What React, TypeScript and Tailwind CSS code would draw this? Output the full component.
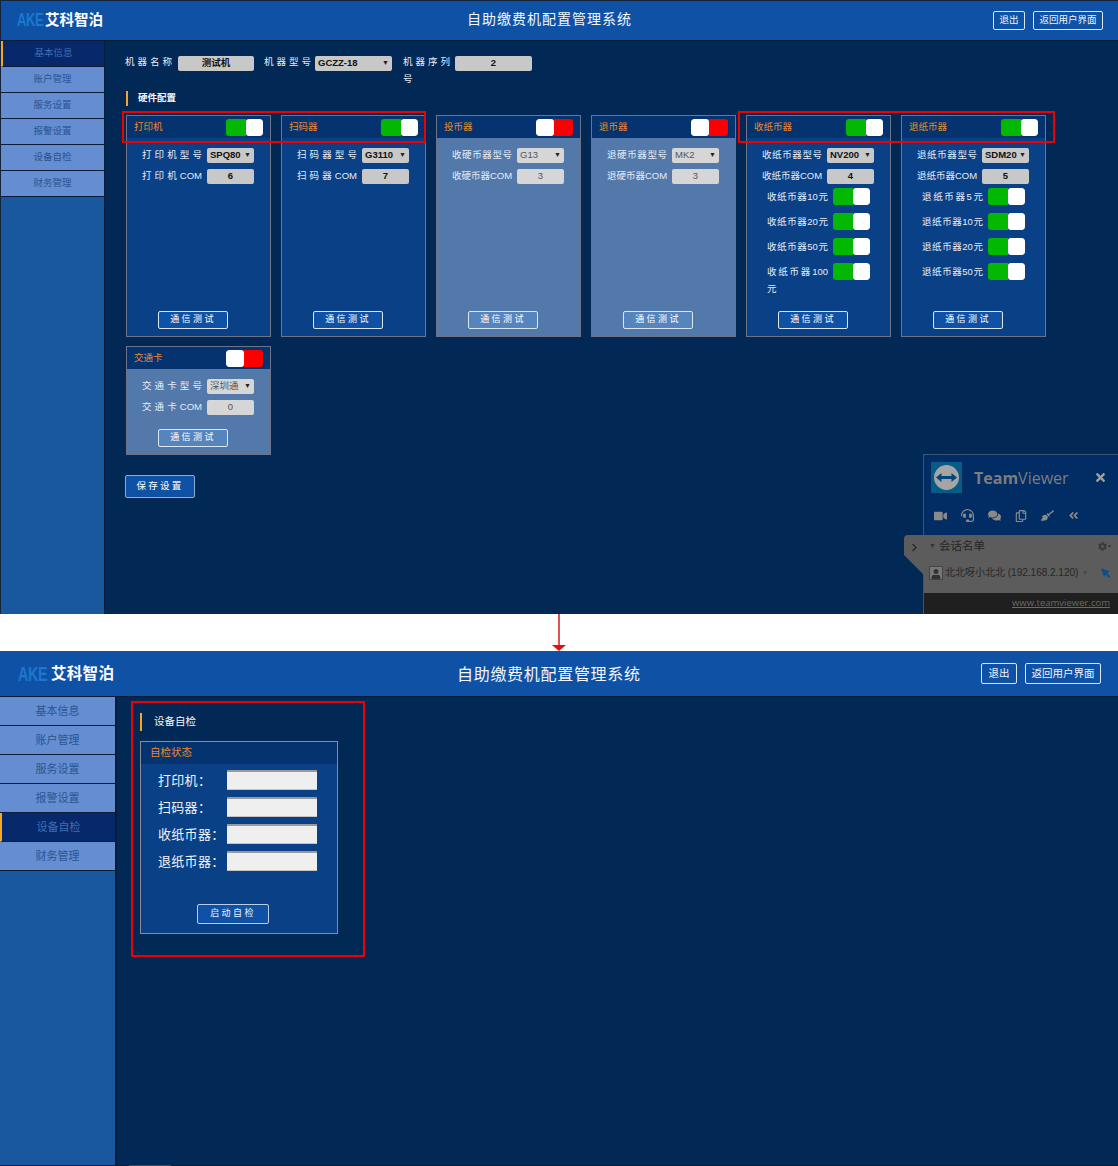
import { FaAngleDoubleLeft, FaBroom, FaChevronRight, FaCog, FaComments, FaHeadset, FaRegCopy, FaTimes, FaUser, FaVideo } from "react-icons/fa";

const menu = ["基本信息", "账户管理", "服务设置", "报警设置", "设备自检", "财务管理"];

function Logo({ big }: { big?: boolean }) {
  return (
    <div className="flex items-center font-bold">
      <span className={`inline-block origin-left scale-x-[0.72] text-[#1b78d0] tracking-[-0.5px] ${big ? "w-[31px] text-[20px] mr-[2px]" : "w-[28px] text-[18px]"}`}>AKE</span>
      <span className={`text-white ${big ? "text-[15.5px] tracking-[0.3px]" : "text-[14.5px]"}`}>艾科智泊</span>
    </div>
  );
}

function Toggle({ on }: { on: boolean }) {
  return (
    <div className="flex w-[37px] h-[17px] rounded-[3px] overflow-hidden shrink-0">
      {on ? (
        <>
          <div className="w-[20px] bg-[#02b802]" />
          <div className="flex-1 bg-white rounded-[3px]" />
        </>
      ) : (
        <>
          <div className="w-[18px] bg-white rounded-[3px]" />
          <div className="flex-1 bg-[#fb0000]" />
        </>
      )}
    </div>
  );
}

function Control({ value, select, off, width = "w-[47px]" }: { value: string; select?: boolean; off?: boolean; width?: string }) {
  return (
    <div
      className={`flex items-center h-[15px] rounded-[2px] text-[9.5px] shrink-0 ${width} ${
        off ? "bg-[#d6d6d6] text-[#555]" : "bg-[#c8c8c8] text-[#111] font-bold"
      } ${select ? "justify-between pl-[3px] pr-[3px]" : "justify-center"}`}
    >
      <span className="whitespace-nowrap">{value}</span>
      {select && <span className="text-[7px] text-[#222]">▼</span>}
    </div>
  );
}

function Label({ text, tail, width = "w-[60px]", lift = "" }: { text: string; tail?: string; width?: string; lift?: string }) {
  return (
    <div className={`${width} ${lift} shrink-0 text-[9.5px] leading-[17px] text-[#e6edf7]`}>
      <div className="whitespace-nowrap [text-align:justify] [text-align-last:justify]">{text}</div>
      {tail && <div>{tail}</div>}
    </div>
  );
}

type Device = {
  name: string;
  on: boolean;
  model: string;
  modelLabel: string;
  comLabel: string;
  com: string;
  bills?: { label: string; tail?: string }[];
};

function DeviceCard({ d, h }: { d: Device; h: string }) {
  return (
    <div className={`flex flex-col border border-[#6f7388] ${h} ${d.on ? "bg-[#0a4085]" : "bg-[#5279a9]"}`}>
      <div className="flex items-center justify-between h-[22px] shrink-0 bg-[#04336f] pl-[7px] pr-[7px]">
        <span className="text-[9.5px] text-[#e98a2e]">{d.name}</span>
        <Toggle on={d.on} />
      </div>
      <div className="flex flex-col gap-[6px] pt-[10px] pl-[15px]">
        <div className="flex items-center gap-[5px] h-[15px]">
          <Label text={d.modelLabel} lift="-mt-[2px]" />
          <Control value={d.model} select off={!d.on} />
        </div>
        <div className="flex items-center gap-[5px] h-[15px]">
          <Label text={d.comLabel} lift="-mt-[2px]" />
          <Control value={d.com} off={!d.on} />
        </div>
      </div>
      {d.bills && (
        <div className="flex flex-col gap-[8px] pt-[4px] pl-[20px]">
          {d.bills.map((b) => (
            <div key={b.label} className="flex items-start gap-[5px]">
              <Label text={b.label} tail={b.tail} width="w-[61px]" />
              <Toggle on />
            </div>
          ))}
        </div>
      )}
      <div className="mt-auto mb-[7px] pl-[31px]">
        <button
          className={`w-[70px] h-[18px] border border-[#dbe6f3] rounded-[2px] text-[9px] tracking-[2.4px] text-white ${
            d.on ? "bg-[#0f52a5]" : "bg-[#5684bd]"
          }`}
        >
          通信测试
        </button>
      </div>
    </div>
  );
}

const devices: Device[] = [
  { name: "打印机", on: true, model: "SPQ80", modelLabel: "打印机型号", comLabel: "打印机COM", com: "6" },
  { name: "扫码器", on: true, model: "G3110", modelLabel: "扫码器型号", comLabel: "扫码器COM", com: "7" },
  { name: "投币器", on: false, model: "G13", modelLabel: "收硬币器型号", comLabel: "收硬币器COM", com: "3" },
  { name: "退币器", on: false, model: "MK2", modelLabel: "退硬币器型号", comLabel: "退硬币器COM", com: "3" },
  {
    name: "收纸币器",
    on: true,
    model: "NV200",
    modelLabel: "收纸币器型号",
    comLabel: "收纸币器COM",
    com: "4",
    bills: [{ label: "收纸币器10元" }, { label: "收纸币器20元" }, { label: "收纸币器50元" }, { label: "收纸币器100", tail: "元" }],
  },
  {
    name: "退纸币器",
    on: true,
    model: "SDM20",
    modelLabel: "退纸币器型号",
    comLabel: "退纸币器COM",
    com: "5",
    bills: [{ label: "退纸币器5元" }, { label: "退纸币器10元" }, { label: "退纸币器20元" }, { label: "退纸币器50元" }],
  },
];

function TeamViewer() {
  return (
    <div className="absolute right-0 bottom-0 w-[195px] h-[160px] border-l border-t border-[#3a5576] flex flex-col">
      {/* collapse tab */}
      <div className="absolute left-[-20px] top-[80px] w-[20px] h-[40px] bg-[#5c5c5c] rounded-tl-[4px] [clip-path:polygon(0_0,100%_0,100%_100%,40%_70%,0_50%)] flex pt-[8px] pl-[7px]">
        <FaChevronRight className="w-[7px] h-[9px] text-[#2b2b2b]" />
      </div>
      <div className="h-[80px] bg-[#012c64] px-[7px] pt-[7px] shrink-0">
        <div className="flex items-center">
          <svg width="31" height="31" viewBox="0 0 31 31" className="shrink-0">
            <rect width="31" height="31" fill="#045c87" />
            <circle cx="15.500" cy="15.500" r="12.500" fill="#a5a5a5" />
            <path d="M5 15.500l5.500-4.500v3h10v-3l5.500 4.500-5.500 4.500v-3h-10v3z" fill="#03457a" />
          </svg>
          <span className="ml-[12px] text-[16px] text-[#7d7d7d] [font-family:'Open_Sans',sans-serif]">
            <b>Team</b>Viewer
          </span>
          <FaTimes className="ml-auto mr-[5px] w-[11px] h-[13px] text-[#a0a0a0]" />
        </div>
        <div className="flex items-center gap-[14px] mt-[16px] ml-[3px] text-[#8a8a8a]">
          <FaVideo className="w-[13px] h-[12px]" />
          <FaHeadset className="w-[13px] h-[13px]" />
          <FaComments className="w-[13px] h-[13px]" />
          <FaRegCopy className="w-[12px] h-[12px]" />
          <FaBroom className="w-[13px] h-[13px]" />
          <FaAngleDoubleLeft className="w-[11px] h-[11px]" />
        </div>
      </div>
      <div className="flex-1 bg-[#5c5c5c] px-[5px] pt-[3px] text-[#262626]">
        <div className="flex items-center text-[11.5px]">
          <span className="text-[7px] mr-[3px] text-[#333]">▼</span>
          <span>会话名单</span>
          <FaCog className="ml-auto w-[9px] h-[9px] text-[#3a3a3a]" />
          <span className="text-[5px] mr-[1px] text-[#333]">▼</span>
        </div>
        <div className="flex items-center mt-[10px] text-[10px]">
          <div className="w-[14px] h-[14px] bg-[#777] border border-[#444] flex items-end justify-center mr-[2px] shrink-0">
            <FaUser className="w-[10px] h-[10px] text-[#333]" />
          </div>
          <span className="whitespace-nowrap">北北呀小北北 (192.168.2.120)</span>
          <span className="text-[7px] ml-[3px] text-[#4a4a4a]">▼</span>
          <svg width="10" height="10" viewBox="0 0 10 10" className="ml-auto mr-[2px] shrink-0">
            <path d="M0 0l9 3.500-3 1.500 3.500 3.500-1.500 1.500-3.500-3.500-1.500 3z" fill="#0d4f8a" />
          </svg>
        </div>
      </div>
      <div className="h-[21px] bg-[#1f1f1f] shrink-0 flex items-center justify-end pr-[8px] text-[9.5px] text-[#6a6a6a] underline [font-family:'Open_Sans',sans-serif]">
        www.teamviewer.com
      </div>
    </div>
  );
}

function TopPanel() {
  return (
    <div className="relative h-[614px] flex flex-col border-t border-l border-[#16243a] bg-[#022856]">
      <header className="flex items-center justify-between h-[39px] bg-[#0f52a5] pl-[16px] pr-[15px] shrink-0">
        <Logo />
        <h1 className="absolute left-[466px] top-[10px] text-[14px] leading-[16px] tracking-[1px] font-normal text-[#f2f6fb]">自助缴费机配置管理系统</h1>
        <div className="flex gap-[8px]">
          <button className="w-[32px] h-[19px] border border-[#dbe6f3] rounded-[2px] text-[9.5px] text-[#eef3fa]">退出</button>
          <button className="w-[70px] h-[19px] border border-[#dbe6f3] rounded-[2px] text-[9.5px] text-[#eef3fa]">返回用户界面</button>
        </div>
      </header>
      <div className="h-px bg-[#0b1c38] shrink-0" />
      <div className="flex flex-1 min-h-0">
        <aside className="w-[103px] shrink-0 bg-[#19589f] border-r border-[#0b1c38] box-content">
          {menu.map((m, i) => (
            <div
              key={m}
              className={`flex items-center justify-center h-[26px] border-b border-[#0b1c38] text-[9.5px] ${
                i === 0 ? "bg-[#07296b] text-[#3f6fb5] border-l-2 border-l-[#f5a623]" : "bg-[#648ed1] text-[#2b5590]"
              }`}
            >
              {m}
            </div>
          ))}
        </aside>
        <main className="flex-1 pl-[20px] pt-[15px]">
          <div className="flex items-start h-[35px]">
            <div className="flex items-start gap-[6px] w-[139px]">
              <Label text="机器名称" width="w-[47px]" lift="-mt-[3px]" />
              <Control value="测试机" width="w-[76px]" />
            </div>
            <div className="flex items-start gap-[4px] w-[139px]">
              <Label text="机器型号" width="w-[47px]" lift="-mt-[3px]" />
              <Control value="GCZZ-18" select width="w-[77px]" />
            </div>
            <div className="flex items-start gap-[5px]">
              <Label text="机器序列" tail="号" width="w-[47px]" lift="-mt-[3px]" />
              <Control value="2" width="w-[77px]" />
            </div>
          </div>
          <div className="flex items-center h-[15px] border-l-2 border-[#f5a623] ml-px pl-[10px] text-[9.5px] text-[#f2f6fb] font-bold">硬件配置</div>
          <div className="grid grid-cols-[repeat(6,145px)] gap-x-[10px] gap-y-[9px] mt-[9px] ml-px">
            {devices.map((d) => (
              <DeviceCard key={d.name} d={d} h="h-[222px]" />
            ))}
            <DeviceCard
              d={{ name: "交通卡", on: false, model: "深圳通", modelLabel: "交通卡型号", comLabel: "交通卡COM", com: "0" }}
              h="h-[109px]"
            />
          </div>
          <button className="mt-[20px] w-[70px] h-[23px] border border-[#8eaad0] rounded-[2px] bg-[#0f52a5] text-[9.5px] tracking-[2.2px] text-white">保存设置</button>
        </main>
      </div>
      <TeamViewer />
      <div className="absolute left-[121px] top-[110px] w-[304px] h-[32px] border-2 border-[#f00000]" />
      <div className="absolute left-[737px] top-[110px] w-[317px] h-[32px] border-2 border-[#f00000]" />
    </div>
  );
}

function BottomPanel() {
  return (
    <div className="relative h-[515px] flex flex-col bg-[#022856]">
      <header className="relative flex items-center justify-between h-[45px] bg-[#0f52a5] pl-[18px] pr-[17px] shrink-0">
        <Logo big />
        <h1 className="absolute left-[457px] top-[15px] text-[16px] leading-[18px] tracking-[0.7px] font-normal text-[#f2f6fb]">自助缴费机配置管理系统</h1>
        <div className="flex gap-[8px]">
          <button className="w-[36px] h-[21px] border border-[#dbe6f3] rounded-[2px] text-[10.5px] text-[#eef3fa]">退出</button>
          <button className="w-[76px] h-[21px] border border-[#dbe6f3] rounded-[2px] text-[10.5px] text-[#eef3fa]">返回用户界面</button>
        </div>
      </header>
      <div className="h-px bg-[#0b1c38] shrink-0" />
      <div className="flex flex-1 min-h-0">
        <aside className="w-[115px] shrink-0 bg-[#19589f] border-r-2 border-[#0b1c38] box-content">
          {menu.map((m, i) => (
            <div
              key={m}
              className={`flex items-center justify-center h-[29px] pt-px border-b border-[#0b1c38] text-[11px] ${
                i === 4 ? "bg-[#07296b] text-[#3f6fb5] border-l-2 border-l-[#f5a623]" : "bg-[#648ed1] text-[#2b5590]"
              }`}
            >
              {m}
            </div>
          ))}
        </aside>
        <main className="flex-1 pl-[23px] pt-[16px]">
          <div className="flex items-center h-[18px] border-l-2 border-[#f5a623] pl-[12px] text-[10.5px] text-[#f2f6fb]">设备自检</div>
          <div className="flex flex-col w-[198px] h-[193px] mt-[10px] border border-[#8a8a9a] bg-[#0a4085]">
            <div className="flex items-center h-[22px] shrink-0 bg-[#04336f] pl-[9px] text-[10.5px] text-[#e98a2e]">自检状态</div>
            <div className="flex flex-col gap-[7px] pt-[6px] pl-[17px]">
              {["打印机：", "扫码器：", "收纸币器：", "退纸币器："].map((l) => (
                <div key={l} className="flex items-center h-[20px]">
                  <span className="w-[69px] shrink-0 pt-[2px] text-[13px] tracking-[0.3px] text-[#eef3fa] whitespace-nowrap">{l}</span>
                  <div className="w-[90px] h-[20px] bg-[#efefef] border-t-2 border-t-[#9a9a9a] border-b border-b-[#c4c4c4]" />
                </div>
              ))}
            </div>
            <div className="mt-auto mb-[9px] ml-[56px]">
              <button className="w-[72px] h-[20px] border border-[#b9cde6] rounded-[2px] bg-[#0f52a5] text-[9px] tracking-[2.4px] text-[#eef3fa]">启动自检</button>
            </div>
          </div>
        </main>
      </div>
      <div className="h-px bg-[#0b1c38] shrink-0">
        <div className="ml-[129px] w-[42px] h-px bg-[#3f4a5c]" />
      </div>
      <div className="absolute left-[131px] top-[50px] w-[234px] h-[256px] border-2 border-[#f00000]" />
    </div>
  );
}

export default function App() {
  return (
    <div className="w-[1118px] h-[1166px] bg-white overflow-hidden [font-family:'Liberation_Sans','Noto_Sans_CJK_SC',sans-serif]">
      <TopPanel />
      <div className="h-[37px] flex justify-center">
        <svg width="16" height="37" viewBox="0 0 16 37">
          <path d="M8 0v32" stroke="#d81818" strokeWidth="1.500" />
          <path d="M1 31h14l-7 6z" fill="#e01010" />
        </svg>
      </div>
      <BottomPanel />
    </div>
  );
}
